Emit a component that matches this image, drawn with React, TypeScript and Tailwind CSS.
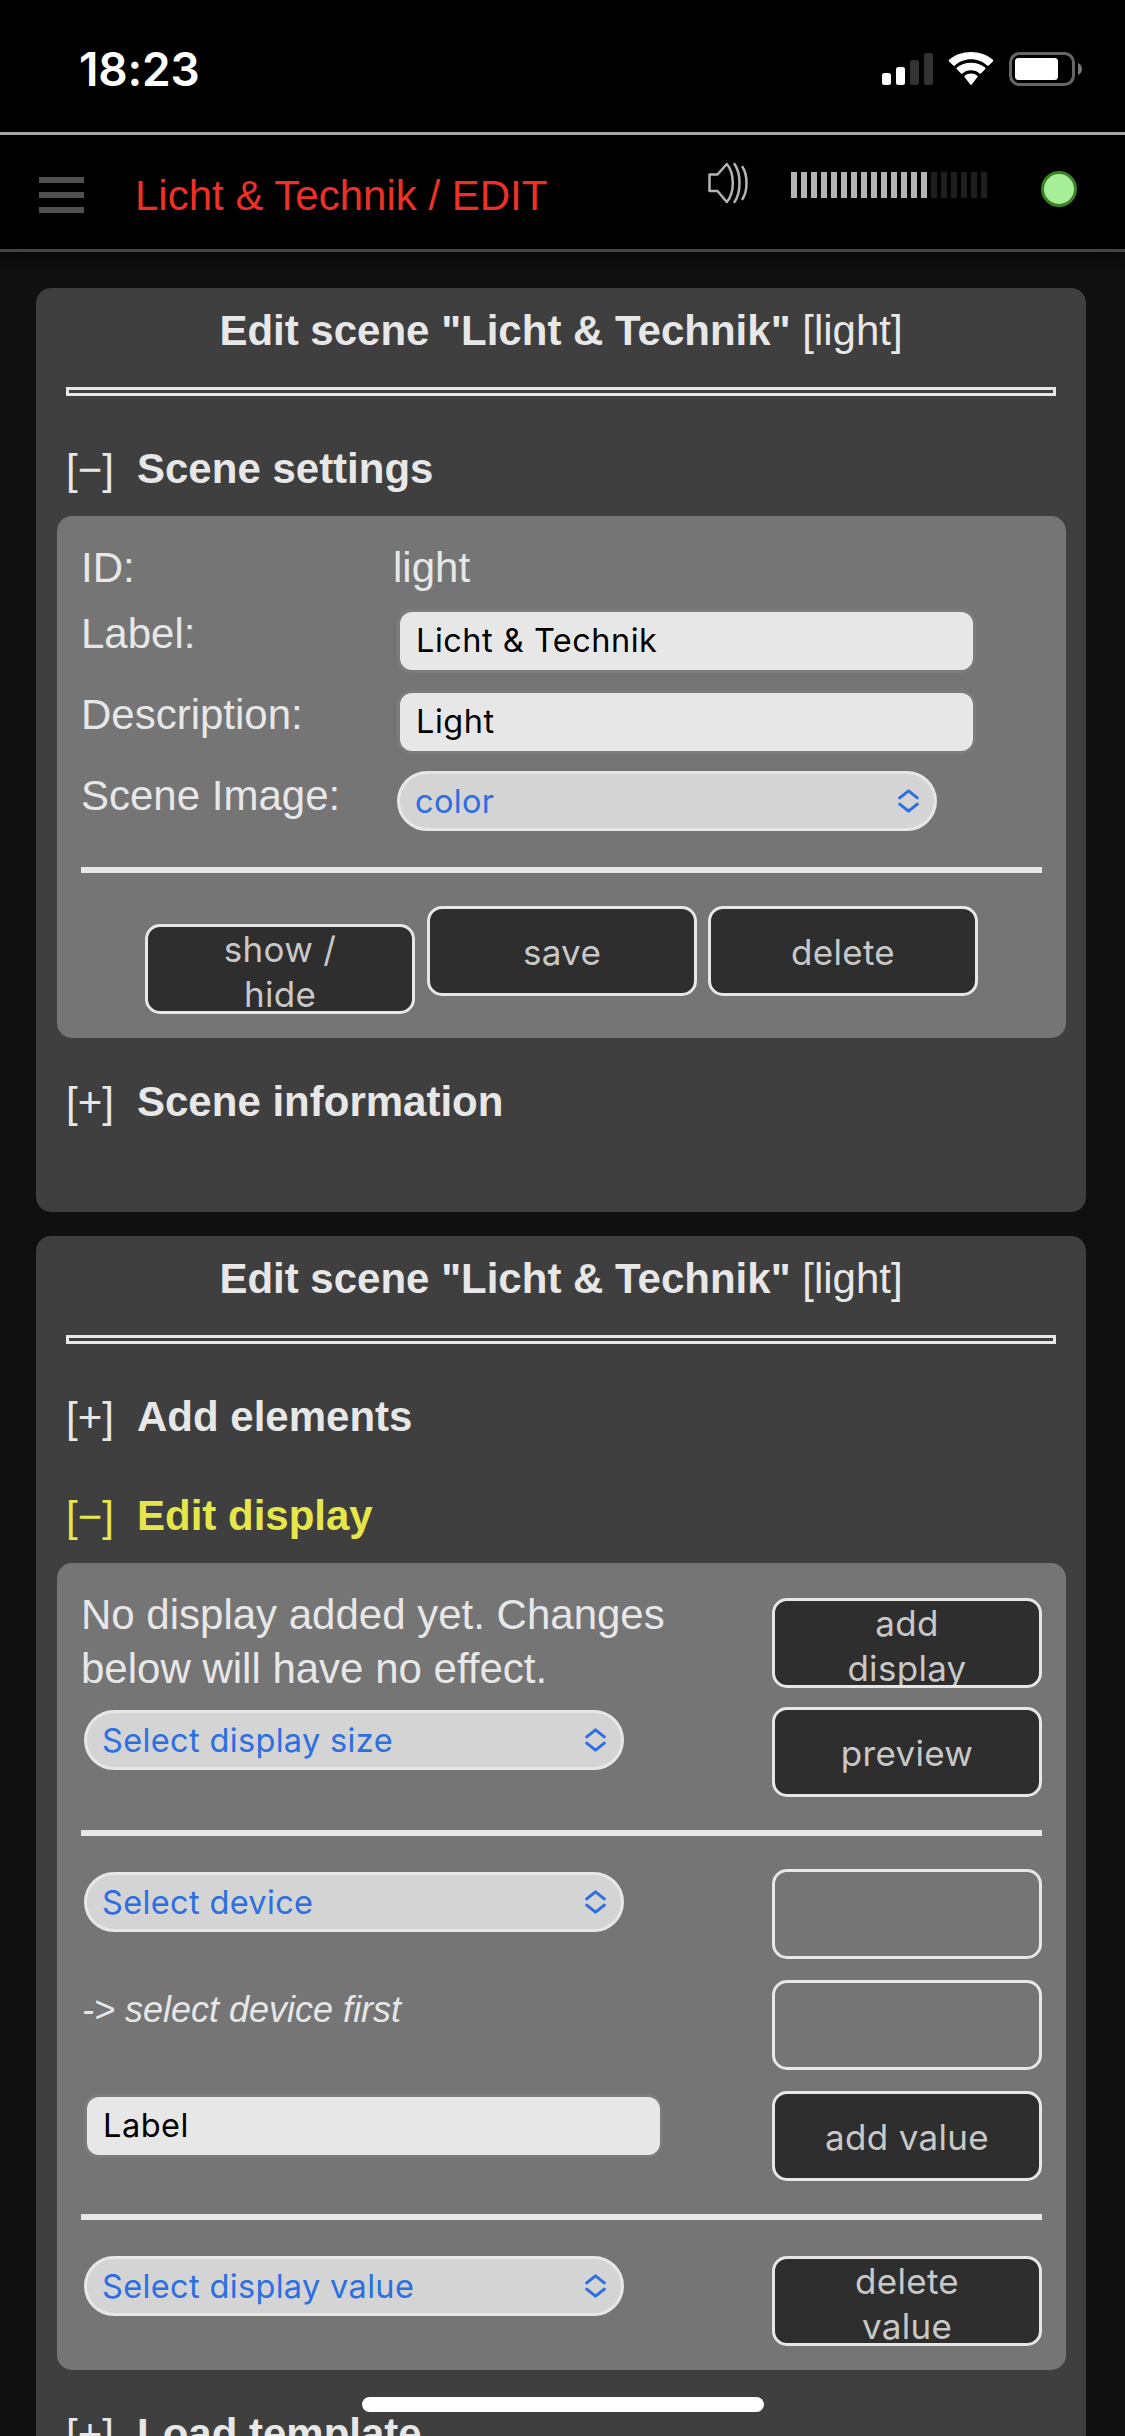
import type { ReactNode } from "react";

function StatusBar() {
  return (
    <div className="flex h-[132px] items-start justify-between bg-black pl-[79px] pr-[43px]">
      <span className="mt-[41px] font-['Inter'] text-[46px] font-semibold leading-[56px] tracking-[-0.2px] text-white">18:23</span>
      <div className="mt-[52px] flex items-start">
        <svg width="51" height="34" viewBox="0 0 51 34" fill="#fff">
          <rect x="0" y="21" width="9" height="12" rx="2.5" />
          <rect x="14" y="15" width="9" height="18" rx="2.5" />
          <rect x="28" y="8" width="9" height="25" rx="2.5" fill="#333" />
          <rect x="42" y="1" width="9" height="32" rx="2.5" fill="#333" />
        </svg>
        <svg className="ml-[15px]" width="46" height="34" viewBox="0 0 46 34" fill="#fff">
          <path d="M23 7.2c6.300 0 12 2.400 16.300 6.400.4.400 1 .4 1.400 0l4.200-4.200c.5-.5.500-1.200 0-1.700C39.100 2.800 31.400 0 23 0S6.900 2.800 1.100 7.700c-.5.500-.5 1.200 0 1.700l4.200 4.200c.4.400 1 .4 1.400 0C11 9.600 16.700 7.200 23 7.200z" />
          <path d="M23 18.200c3.200 0 6.200 1.200 8.500 3.200.4.400 1 .4 1.400 0l4.200-4.200c.5-.5.500-1.200 0-1.700C33.300 12.400 28.400 10.800 23 10.800s-10.300 1.600-14.100 4.700c-.5.500-.5 1.200 0 1.700l4.200 4.200c.4.400 1 .4 1.400 0 2.300-2 5.300-3.200 8.500-3.200z" />
          <path d="M29.300 25.200c.5-.5.500-1.100 0-1.500-1.700-1.400-3.900-2.200-6.300-2.200s-4.600.8-6.300 2.200c-.5.400-.5 1 0 1.500l5.600 7.400c.4.500 1 .5 1.400 0z" />
        </svg>
        <svg className="ml-[15px]" width="73" height="34" viewBox="0 0 73 34">
          <rect x="1.500" y="1.500" width="63" height="31" rx="9" fill="none" stroke="#666" strokeWidth="3" />
          <rect x="6" y="6" width="43" height="22" rx="3.500" fill="#fff" />
          <path d="M69 11c2.500 1 4 3.200 4 6s-1.500 5-4 6z" fill="#777" />
        </svg>
      </div>
    </div>
  );
}

function Header() {
  return (
    <header className="flex h-[120px] items-start border-y-[3px] border-t-[#a7a7a7] border-b-[#444] bg-black shadow-[0_0_24px_#000]">
      <div className="ml-[39px] mt-[42px] flex w-[45px] flex-col gap-[9px]">
        <span className="h-[6px] bg-[#505050]" />
        <span className="h-[6px] bg-[#505050]" />
        <span className="h-[6px] bg-[#505050]" />
      </div>
      <h1 className="ml-[51px] mt-[34px] w-[573px] text-[42px] leading-[53px] text-[#ee3124]">Licht &amp; Technik / EDIT</h1>
      <svg className="mt-[27px]" width="42" height="42" viewBox="0 0 42 42" fill="none" stroke="#b4b4b4" strokeWidth="2.500" strokeLinejoin="round" strokeLinecap="round">
        <path d="M1.500 12.500v16.500h8L18.800 40c4-4.500 6-11 6-19s-2-14.500-6-19L9.500 12.500z" />
        <path d="M26.500 2c3.500 5 5 12 5 19s-1.500 14-5 19" />
        <path d="M34.500 5c3 4.500 4 10 4 16s-1 11.500-4 16" />
      </svg>
      <div className="ml-[41px] mt-[37px] flex gap-[4px]">
        {Array.from({ length: 20 }, (_, i) => (
          <span key={i} className={i < 14 ? "h-[26px] w-[6px] bg-[#b4b4b4]" : "h-[26px] w-[6px] bg-[#1f1f1f]"} />
        ))}
      </div>
      <span className="ml-[54px] mt-[36px] size-[36px] rounded-full border-[3px] border-[#3a8222] bg-[#a7ee98]" />
    </header>
  );
}

function Card({ className = "", children }: { className?: string; children: ReactNode }) {
  return (
    <section className={`ml-[36px] w-[1050px] rounded-[15px] bg-[#3f3f3f] ${className}`}>
      <h2 className="h-[99px] pt-[16px] text-center leading-[53px]">
        <b>Edit scene "Licht &amp; Technik"</b> [light]
      </h2>
      <div className="mx-[30px] h-[9px] border-[3px] border-[#e7e7e7]" />
      {children}
    </section>
  );
}

function Section({ sign, title, className = "" }: { sign: string; title: string; className?: string }) {
  return (
    <div className={`flex h-[53px] pl-[30px] leading-[53px] ${className}`}>
      <span className="w-[71px] pt-px">[{sign}]</span>
      <b>{title}</b>
    </div>
  );
}

function Panel({ children }: { children: ReactNode }) {
  return (
    <div className="ml-[21px] mt-[21px] w-[1009px] rounded-[15px] bg-[#757575] px-[24px] pb-[24px] pt-[25px]">
      {children}
    </div>
  );
}

function TextField({ value, className = "" }: { value: string; className?: string }) {
  return (
    <input
      defaultValue={value}
      className={`block h-[64px] w-[579px] rounded-[15px] border-[3px] border-[#7c7c7f] bg-[#e7e7e7] px-[16px] pb-[2px] font-['Inter'] text-[32.5px] tracking-[0.5px] text-black ${className}`}
    />
  );
}

function Select({ value, className = "" }: { value: string; className?: string }) {
  return (
    <button
      className={`flex h-[60px] w-[540px] items-center justify-between rounded-full border-[3px] border-[#e7e7e7] bg-[#d4d4d4] pl-[15px] pr-[15px] font-['Inter'] text-[32.5px] leading-[40px] tracking-[0.35px] text-[#2b6fe2] ${className}`}
    >
      <span className="pt-[2px]">{value}</span>
      <svg width="21" height="24" viewBox="0 0 21 24" fill="none" stroke="#2b6fe2" strokeWidth="3" strokeLinecap="round" strokeLinejoin="round">
        <path d="M1.700 8.800L10.500 1.800L19.300 8.800" />
        <path d="M1.700 15.200L10.500 22.200L19.300 15.200" />
      </svg>
    </button>
  );
}

function Button({ lines, className = "" }: { lines: string[]; className?: string }) {
  return (
    <button
      className={`flex h-[90px] w-[270px] shrink-0 flex-col items-center overflow-hidden rounded-[15px] border-[3px] border-[#e7e7e7] font-['Inter'] text-[35px] leading-[45px] tracking-[0.3px] text-[#c8c8c8] ${
        lines.length > 1 ? "justify-start" : "justify-center pt-[2px]"
      } ${lines.length > 0 ? "bg-[#2e2e2e]" : ""} ${className}`}
    >
      {lines.map((line) => (
        <span key={line}>{line}</span>
      ))}
    </button>
  );
}

function Rule({ className = "" }: { className?: string }) {
  return <div className={`h-[6px] bg-[#e7e7e7] ${className}`} />;
}

export default function App() {
  return (
    <div className="relative h-[2436px] w-[1125px] overflow-hidden bg-[#101010] font-['Liberation_Sans',Arial,sans-serif] text-[42px] text-[#e7e7e7]">
      <StatusBar />
      <Header />

      <Card className="mt-[36px] h-[924px]">
        <Section sign="−" title="Scene settings" className="mt-[46px]" />
        <Panel>
          <div className="grid grid-cols-[312px_1fr] grid-rows-[66px_81px_81px_81px] leading-[53px]">
            <span>ID:</span>
            <span>light</span>
            <span>Label:</span>
            <TextField value="Licht & Technik" className="ml-[4px] mt-[2px]" />
            <span>Description:</span>
            <TextField value="Light" className="ml-[4px] mt-[2px]" />
            <span>Scene Image:</span>
            <Select value="color" className="ml-[4px] mt-[2px]" />
          </div>
          <Rule className="mt-[17px]" />
          <div className="mt-[33px] flex items-start pl-[64px]">
            <Button lines={["show /", "hide"]} className="mt-[18px]" />
            <Button lines={["save"]} className="ml-[12px]" />
            <Button lines={["delete"]} className="ml-[11px]" />
          </div>
        </Panel>
        <Section sign="+" title="Scene information" className="mt-[37px]" />
      </Card>

      <Card className="mt-[24px] h-[1400px]">
        <Section sign="+" title="Add elements" className="mt-[46px]" />
        <Section sign="−" title="Edit display" className="mt-[46px] text-[#e6e64a]" />
        <Panel>
          <div className="flex justify-between">
            <div>
              <p className="w-[600px] leading-[54px]">No display added yet. Changes below will have no effect.</p>
              <Select value="Select display size" className="ml-[3px] mt-[14px]" />
            </div>
            <div className="flex flex-col gap-[19px] pt-[10px]">
              <Button lines={["add", "display"]} />
              <Button lines={["preview"]} />
            </div>
          </div>
          <Rule className="mt-[33px]" />
          <div className="mt-[33px] flex justify-between">
            <div>
              <Select value="Select device" className="ml-[3px] mt-[3px]" />
              <p className="ml-px mt-[55px] text-[36px] italic leading-[45px]">-&gt; select device first</p>
              <TextField value="Label" className="ml-[3px] mt-[62px]" />
            </div>
            <div className="flex flex-col gap-[21px]">
              <Button lines={[]} />
              <Button lines={[]} />
              <Button lines={["add value"]} />
            </div>
          </div>
          <Rule className="mt-[33px]" />
          <div className="mt-[36px] flex justify-between">
            <Select value="Select display value" className="ml-[3px]" />
            <Button lines={["delete", "value"]} />
          </div>
        </Panel>
        <Section sign="+" title="Load template" className="mt-[37px]" />
      </Card>

      <div className="absolute bottom-[24px] left-[362px] h-[15px] w-[402px] rounded-full bg-white" />
    </div>
  );
}
